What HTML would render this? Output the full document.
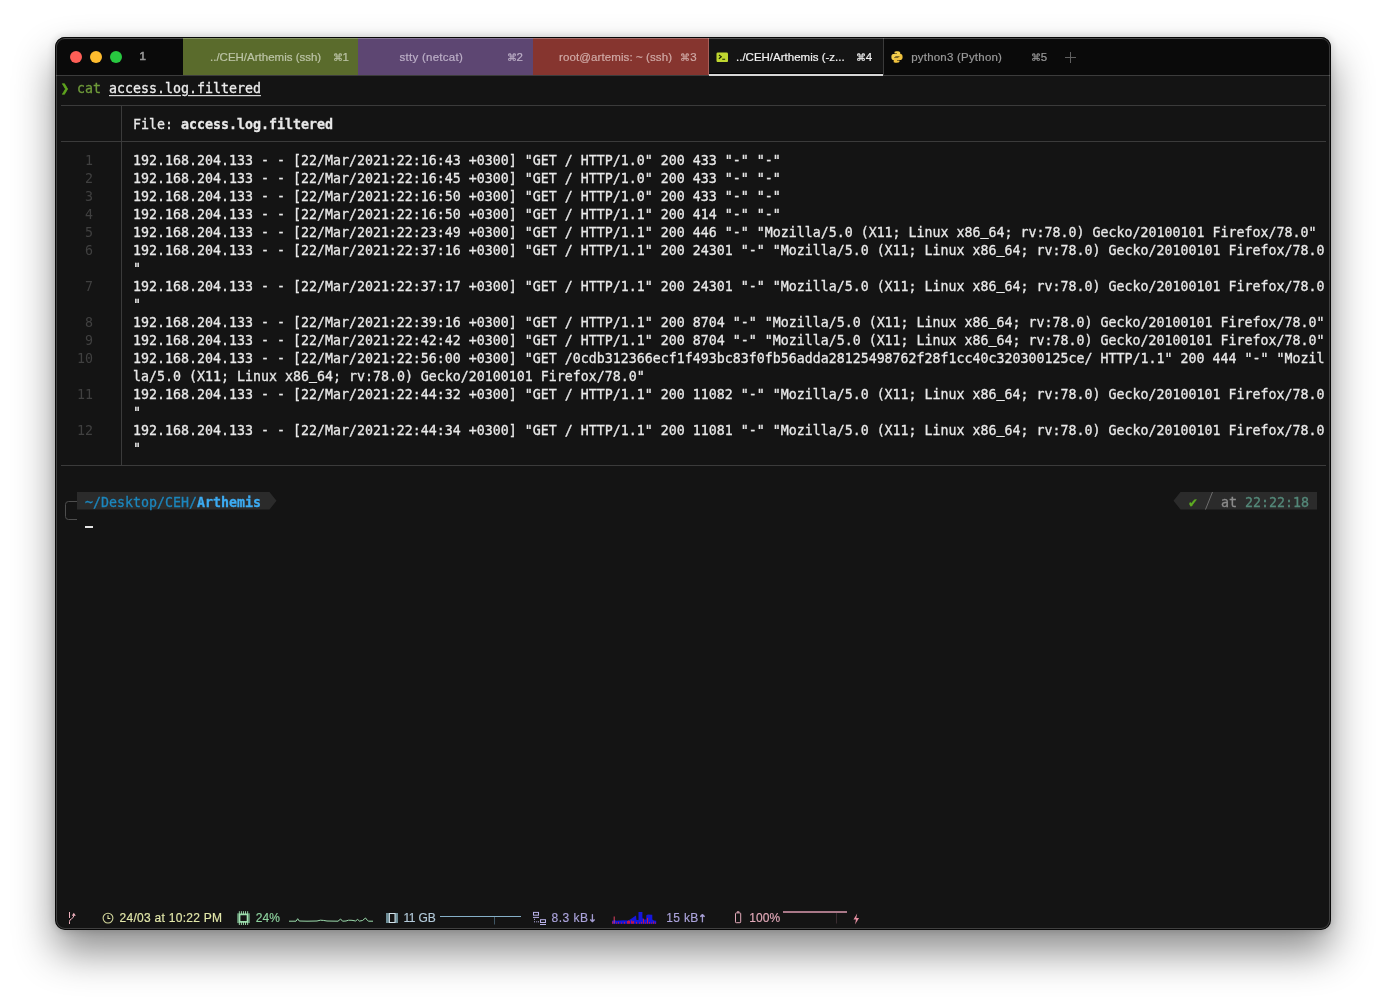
<!DOCTYPE html>
<html><head><meta charset="utf-8"><title>Terminal</title>
<style>
html,body{margin:0;padding:0;background:#fff;}
body{width:1386px;height:1003px;position:relative;overflow:hidden;}
#win{will-change:transform;position:absolute;left:55px;top:37px;width:1276px;height:893px;background:#141414;border-radius:10px;
 box-shadow:0 22px 40px rgba(0,0,0,0.45), 0 0 10px rgba(0,0,0,0.18);overflow:hidden;}
#win:after{content:"";position:absolute;left:0;top:0;right:0;bottom:0;border-radius:10px;box-shadow:inset 0 0 0 1px rgba(0,0,0,0.85), inset 0 0 0 2px rgba(255,255,255,0.19);pointer-events:none;}
#tabbar{position:absolute;left:0;top:0;width:1276px;height:38px;background:#0a0a0a;border-bottom:1px solid #3c3c3c;font-family:"Liberation Sans",sans-serif;font-size:11.5px;color:#a8a8a8;}
.tl{position:absolute;top:14px;width:12px;height:12px;border-radius:50%;}
.tab{position:absolute;top:1px;height:37px;line-height:39px;white-space:nowrap;}
.tab span{position:absolute;top:0;-webkit-text-stroke:0.2px;}
.tab i{font-style:normal;font-size:10px;}
.mono,.row,.prow{font-family:"DejaVu Sans Mono","Liberation Mono",monospace;font-size:13.29px;}
.row,.prow{position:absolute;left:0;height:18px;line-height:18px;white-space:pre;color:#e8e8e8;width:1276px;-webkit-text-stroke:0.3px;transform:scaleY(1.07);transform-origin:0 13.600px;}
.prow span{position:absolute;top:0;}
.row s{text-decoration:none;position:relative;top:-2px;}
.row .ln{position:absolute;color:#404040;-webkit-text-stroke:0;}
.row .tx{position:absolute;left:78px;}
.hl{position:absolute;height:1px;background:#3b3b3b;left:6px;width:1265px;}
#status{position:absolute;left:0;top:868px;width:1276px;height:24px;font-family:"Liberation Sans",sans-serif;font-size:12px;line-height:26px;white-space:nowrap;}
#status span{position:absolute;top:0.300px;-webkit-text-stroke:0.15px;}
#status i{font-style:normal;font-family:"DejaVu Sans",sans-serif;font-size:10.500px;-webkit-text-stroke:0.4px;margin-left:-0.500px}
#status svg{position:absolute;overflow:visible;}
</style></head><body>
<div id="win">
 <div id="tabbar">
  <div class="tl" style="left:15px;background:#fe5f57;"></div>
  <div class="tl" style="left:35px;background:#febc2e;"></div>
  <div class="tl" style="left:55px;background:#28c840;"></div>
  <span style="position:absolute;left:84.500px;top:0;line-height:38px;-webkit-text-stroke:0.600px;color:#9a9a9a;">1</span>
  <div class="tab" style="left:128px;width:175px;background:#5a6b2c;"><span style="left:27px;color:#bcc4a6">../CEH/Arthemis (ssh)</span><span style="left:149.500px;color:#bcc4a6"><i>⌘</i>1</span></div>
  <div class="tab" style="left:303px;width:175px;background:#5d4672;"><span style="left:41.500px;color:#bdb0c8;letter-spacing:0.27px">stty (netcat)</span><span style="left:148.500px;color:#bdb0c8"><i>⌘</i>2</span></div>
  <div class="tab" style="left:478px;width:175px;background:#86352f;"><span style="left:26px;color:#d0aaa6;letter-spacing:0.1px">root@artemis: ~ (ssh)</span><span style="left:147.300px;color:#d0aaa6"><i>⌘</i>3</span></div>
  <div class="tab" style="left:653px;width:175px;background:#141414;border-left:1px solid #a85d58;box-sizing:border-box">
    <svg style="position:absolute;left:6.700px;top:13.800px" width="12.500" height="10.600" viewBox="0 0 13 11"><rect x="0.5" y="0.5" width="12" height="10" rx="1.5" fill="#bfd730"/><path d="M3 3 L5.5 5 L3 7 M6.5 7.5 H9.5" stroke="#1a2200" stroke-width="1.2" fill="none"/></svg>
    <span style="left:27px;color:#f2f2f2">../CEH/Arthemis (-z...</span><span style="left:146.700px;color:#f2f2f2"><i>⌘</i>4</span>
    <div style="position:absolute;left:0;top:35px;width:174px;height:1px;background:#000"></div>
    <div style="position:absolute;left:0;top:36px;width:174px;height:2px;background:#d6d6d6"></div>
  </div>
  <div class="tab" style="left:828px;width:175px;border-left:1px solid #3a3a3a;box-sizing:border-box;">
    <svg style="position:absolute;left:7px;top:13px" width="12" height="12" viewBox="0 0 12 12"><path d="M5.9 0.3c-2.6 0-2.4 1.1-2.4 1.1v1.2h2.5v0.4H2.5S0.4 2.8 0.4 5.9c0 3.1 1.8 3 1.8 3h1.1V7.4s-0.1-1.8 1.8-1.8h2.5s1.7 0 1.7-1.7V2.1S9.600 0.3 5.9 0.3z" fill="#f5d04f"/><path d="M6.1 11.700c2.6 0 2.400-1.100 2.400-1.100V9.400H6V9h3.500s2.100 0.200 2.100-2.900c0-3.100-1.800-3-1.800-3H8.700v1.500s0.100 1.800-1.800 1.800H4.400s-1.700 0-1.700 1.700v2.800S2.400 11.700 6.100 11.700z" fill="#f0c23e"/></svg>
    <span style="left:27.200px;color:#9a9a9a;letter-spacing:0.21px">python3 (Python)</span><span style="left:146.700px;color:#9a9a9a"><i>⌘</i>5</span></div>
  <svg style="position:absolute;left:1010px;top:15px" width="11" height="11" viewBox="0 0 11 11"><path d="M5.5 0V11M0 5.500H11" stroke="#606060" stroke-width="1"/></svg>
 </div>

 <div class="prow" style="top:43px"><span style="left:6px;color:#5fa51f;font-weight:bold;-webkit-text-stroke:0.6px">❯</span><span style="left:22px;color:#6f9b3a">cat</span><span style="left:54px;color:#ececec;text-decoration:underline;text-underline-offset:2px">access.log.filtered</span></div>
 <div class="hl" style="top:68px"></div>
 <div class="row" style="top:79px"><span class="tx">File: <b>access.log.filtered</b></span></div>
 <div class="hl" style="top:104px"></div>
 <div style="position:absolute;left:66px;top:68px;width:1px;height:361px;background:#3b3b3b"></div>
<div class="row" style="top:115px"><span class="ln" style="left:30px">1</span><span class="tx">192.168.204.133 - - [22/Mar/2021:22:16:43 +0300] &quot;GET / HTTP/1.0&quot; 200 433 &quot;-&quot; &quot;-&quot;</span></div>
<div class="row" style="top:133px"><span class="ln" style="left:30px">2</span><span class="tx">192.168.204.133 - - [22/Mar/2021:22:16:45 +0300] &quot;GET / HTTP/1.0&quot; 200 433 &quot;-&quot; &quot;-&quot;</span></div>
<div class="row" style="top:151px"><span class="ln" style="left:30px">3</span><span class="tx">192.168.204.133 - - [22/Mar/2021:22:16:50 +0300] &quot;GET / HTTP/1.0&quot; 200 433 &quot;-&quot; &quot;-&quot;</span></div>
<div class="row" style="top:169px"><span class="ln" style="left:30px">4</span><span class="tx">192.168.204.133 - - [22/Mar/2021:22:16:50 +0300] &quot;GET / HTTP/1.1&quot; 200 414 &quot;-&quot; &quot;-&quot;</span></div>
<div class="row" style="top:187px"><span class="ln" style="left:30px">5</span><span class="tx">192.168.204.133 - - [22/Mar/2021:22:23:49 +0300] &quot;GET / HTTP/1.1&quot; 200 446 &quot;-&quot; &quot;Mozilla/5.0 (X11; Linux x86<s>_</s>64; rv:78.0) Gecko/20100101 Firefox/78.0&quot;</span></div>
<div class="row" style="top:205px"><span class="ln" style="left:30px">6</span><span class="tx">192.168.204.133 - - [22/Mar/2021:22:37:16 +0300] &quot;GET / HTTP/1.1&quot; 200 24301 &quot;-&quot; &quot;Mozilla/5.0 (X11; Linux x86<s>_</s>64; rv:78.0) Gecko/20100101 Firefox/78.0</span></div>
<div class="row" style="top:223px"><span class="tx">&quot;</span></div>
<div class="row" style="top:241px"><span class="ln" style="left:30px">7</span><span class="tx">192.168.204.133 - - [22/Mar/2021:22:37:17 +0300] &quot;GET / HTTP/1.1&quot; 200 24301 &quot;-&quot; &quot;Mozilla/5.0 (X11; Linux x86<s>_</s>64; rv:78.0) Gecko/20100101 Firefox/78.0</span></div>
<div class="row" style="top:259px"><span class="tx">&quot;</span></div>
<div class="row" style="top:277px"><span class="ln" style="left:30px">8</span><span class="tx">192.168.204.133 - - [22/Mar/2021:22:39:16 +0300] &quot;GET / HTTP/1.1&quot; 200 8704 &quot;-&quot; &quot;Mozilla/5.0 (X11; Linux x86<s>_</s>64; rv:78.0) Gecko/20100101 Firefox/78.0&quot;</span></div>
<div class="row" style="top:295px"><span class="ln" style="left:30px">9</span><span class="tx">192.168.204.133 - - [22/Mar/2021:22:42:42 +0300] &quot;GET / HTTP/1.1&quot; 200 8704 &quot;-&quot; &quot;Mozilla/5.0 (X11; Linux x86<s>_</s>64; rv:78.0) Gecko/20100101 Firefox/78.0&quot;</span></div>
<div class="row" style="top:313px"><span class="ln" style="left:22px">10</span><span class="tx">192.168.204.133 - - [22/Mar/2021:22:56:00 +0300] &quot;GET /0cdb312366ecf1f493bc83f0fb56adda28125498762f28f1cc40c320300125ce/ HTTP/1.1&quot; 200 444 &quot;-&quot; &quot;Mozil</span></div>
<div class="row" style="top:331px"><span class="tx">la/5.0 (X11; Linux x86<s>_</s>64; rv:78.0) Gecko/20100101 Firefox/78.0&quot;</span></div>
<div class="row" style="top:349px"><span class="ln" style="left:22px">11</span><span class="tx">192.168.204.133 - - [22/Mar/2021:22:44:32 +0300] &quot;GET / HTTP/1.1&quot; 200 11082 &quot;-&quot; &quot;Mozilla/5.0 (X11; Linux x86<s>_</s>64; rv:78.0) Gecko/20100101 Firefox/78.0</span></div>
<div class="row" style="top:367px"><span class="tx">&quot;</span></div>
<div class="row" style="top:385px"><span class="ln" style="left:22px">12</span><span class="tx">192.168.204.133 - - [22/Mar/2021:22:44:34 +0300] &quot;GET / HTTP/1.1&quot; 200 11081 &quot;-&quot; &quot;Mozilla/5.0 (X11; Linux x86<s>_</s>64; rv:78.0) Gecko/20100101 Firefox/78.0</span></div>
<div class="row" style="top:403px"><span class="tx">&quot;</span></div>
 <div class="hl" style="top:428px"></div>

 <!-- prompt -->
 <svg style="position:absolute;left:6px;top:455px" width="16" height="36" viewBox="0 0 16 36"><path d="M16 9.500H7.500Q4.500 9.500 4.500 12.500V24.500Q4.500 27.500 7.500 27.500H16" fill="none" stroke="#4e4e4e" stroke-width="1"/></svg>
 <svg style="position:absolute;left:22px;top:454.800px" width="200" height="18" viewBox="0 0 200 18"><path d="M0 0H192.500L199.500 8.750L192.500 17.500H0Z" fill="#2b2b2b"/></svg>
 <div class="prow" style="top:456.500px"><span style="left:30px;color:#1c86bd">~/Desktop/CEH/<b style="color:#3cabf2">Arthemis</b></span></div>
 <div style="position:absolute;left:30px;top:489px;width:8px;height:2px;background:#e4e4e4"></div>

 <svg style="position:absolute;left:1118px;top:454.800px" width="145" height="18" viewBox="0 0 145 18"><path d="M7.500 0H144V17.500H7.500L0.500 8.750Z" fill="#2b2b2b"/><path d="M39.500 0L32.500 17.500" stroke="#6e6e6e" stroke-width="1"/></svg>
 <div class="prow" style="top:457px"><span style="left:1134px;color:#5fae22">✔</span><span style="left:1166px;color:#8c8c8c">at <span style="position:static;color:#548879">22:22:18</span></span></div>

 <div id="status">
  <svg style="left:12px;top:6px" width="10" height="14" viewBox="0 0 10 14"><path d="M2.500 1V7M2.500 13V10.500Q2.500 8.800 4.500 7.800Q6.800 6.600 6.800 4.500V3" fill="none" stroke="#eeb0bd" stroke-width="1"/><path d="M4.800 4.800L6.800 1.800L8.800 4.800Z" fill="#eeb0bd"/></svg>
  <svg style="left:47.400px;top:6.500px" width="12" height="12" viewBox="0 0 12 12"><circle cx="6" cy="6.100" r="4.900" fill="none" stroke="#d2d69a" stroke-width="1.1"/><path d="M6 3.200V6.500H8.400" fill="none" stroke="#e3e8aa" stroke-width="1.1"/></svg>
  <span style="left:64.500px;color:#e3e8aa;letter-spacing:0.28px">24/03 at 10:22 PM</span>
  <svg style="left:182px;top:6px" width="13" height="15" viewBox="0 0 13 15"><rect x="0.200" y="2.300" width="1.700" height="9.800" fill="#6a9a78"/><rect x="11.100" y="2.300" width="1.700" height="9.800" fill="#6a9a78"/><path d="M1.900 2.400H11.100V11.700H1.900ZM3.400 4.200V10H9.700V4.200Z" fill="#9bdcab" fill-rule="evenodd"/><path d="M2.350 0.200V14M4.400 0.200V3M6.450 0.200V3M8.500 0.200V3M10.650 0.200V14M4.400 11V14M6.450 11V14M8.500 11V14" stroke="#a4e4b4" stroke-width="0.900"/></svg>
  <span style="left:200.700px;color:#8fd4a0;letter-spacing:0.1px">24%</span>
  <svg style="left:234px;top:8px" width="85" height="10" viewBox="0 0 85 10"><path d="M0 8.200H7L8.700 5.700L10.200 8L18 8.200L28 8L31.400 7.200L34.300 7.400L38 8L49 8.200L51.600 6L53.500 8.200L57 8L59.500 7.200L63 7.300L66.500 8L68.600 6.400L70.500 8.100L73.500 7.500L76.500 5L78.500 7.500L79.700 8.200H84" fill="none" stroke="#9cdcac" stroke-width="1"/></svg>
  <svg style="left:331px;top:8px" width="13" height="11" viewBox="0 0 13 11"><rect x="0" y="0" width="12" height="10" fill="#6d8c96"/><rect x="3.400" y="0.500" width="5.600" height="9" fill="#141414" stroke="#d4e4ec" stroke-width="1"/></svg>
  <span style="left:348.500px;color:#b4cbdb;letter-spacing:-0.150px"><b style="font-weight:normal;letter-spacing:-1.400px">1</b>1 GB</span>
  <svg style="left:385px;top:3px" width="82" height="17" viewBox="0 0 82 17"><path d="M54.500 8.500V16.500" fill="none" stroke="#3f5664" stroke-width="1"/><path d="M0 8.500H81" fill="none" stroke="#86b0c8" stroke-width="1.200"/></svg>
  <svg style="left:477px;top:6px" width="15" height="15" viewBox="0 0 15 15"><g fill="none" stroke="#b9b1e8" stroke-width="1"><rect x="1.500" y="1.400" width="5" height="2.800"/><rect x="8.500" y="8.700" width="5" height="2.800"/><path d="M1 6.400H7M8 13.500H14"/></g><g fill="#b9b1e8"><rect x="2" y="7.800" width="1" height="1"/><rect x="2" y="10.300" width="1" height="1"/><rect x="4.200" y="10.300" width="1" height="1"/><rect x="6" y="10.300" width="1" height="1"/></g></svg>
  <span style="left:496.500px;color:#aca4dc;letter-spacing:0.5px">8.3 kB<i>↓</i></span>
  <svg style="left:557px;top:6px" width="46" height="14" viewBox="0 0 46 14"><path d="M0 12.700V9.800L1.500 9.500L3 9L4 9.800L8 9.600L12 9.300L16 9.500L18 8.500L20 7.200L22 5.800L24 4.600L24.500 9H26.500V1H30.400V8L31 6.500L32 8.500H34.300V4.200L36 3.600L40.300 3.800V8.600L42 9.500L44.200 9.800V12.700Z" fill="#1616dc"/><path d="M2.200 12.700V5.500" stroke="#e04060" stroke-width="1"/><path d="M0.500 12.700V10.500M4.500 12.700V11.500M6.500 12.700V11M9.500 12.700V11.500M12.500 12.700V11M15.500 12.700V10M16.500 12.700V9.500M17.500 12.700V10M19.500 12.700V9.500M20.500 12.700V10.500M21.500 12.700V10M24.500 12.700V11M27.500 12.700V11.500M29.500 12.700V11M31.500 12.700V8M33.500 12.700V11.500M35.500 12.700V7M37.500 12.700V11M39.500 12.700V11.500M41.500 12.700V10.500M43.500 12.700V11.500" stroke="#e01830" stroke-width="1" opacity="0.85"/></svg>
  <span style="left:611.300px;color:#aca4dc;letter-spacing:0.3px">15 kB<i>↑</i></span>
  <svg style="left:680px;top:6px" width="7" height="13" viewBox="0 0 7 13"><rect x="0.500" y="1.900" width="5.200" height="9.800" rx="0.800" fill="none" stroke="#e2a9b9" stroke-width="1"/><rect x="1.900" y="0.300" width="2.400" height="1.300" fill="#e2a9b9"/></svg>
  <span style="left:694.200px;color:#e2a9b9;letter-spacing:0.1px">100%</span>
  <svg style="left:728px;top:6px" width="66" height="18" viewBox="0 0 66 18"><path d="M0 1H64" stroke="#a97888" stroke-width="2"/><path d="M53.500 2V12.500" stroke="#3a2c31" stroke-width="1"/></svg>
  <svg style="left:798px;top:7.500px" width="6.500" height="12" viewBox="0 0 7 12"><path d="M4.500 0L0.500 6.600H3.200L2.200 12L6.500 5H3.600Z" fill="#e68fa2"/></svg>
 </div>
<div style="position:absolute;left:8px;top:1px;width:1260px;height:1px;background:rgba(255,255,255,0.10)"></div>
</div>
</body></html>
